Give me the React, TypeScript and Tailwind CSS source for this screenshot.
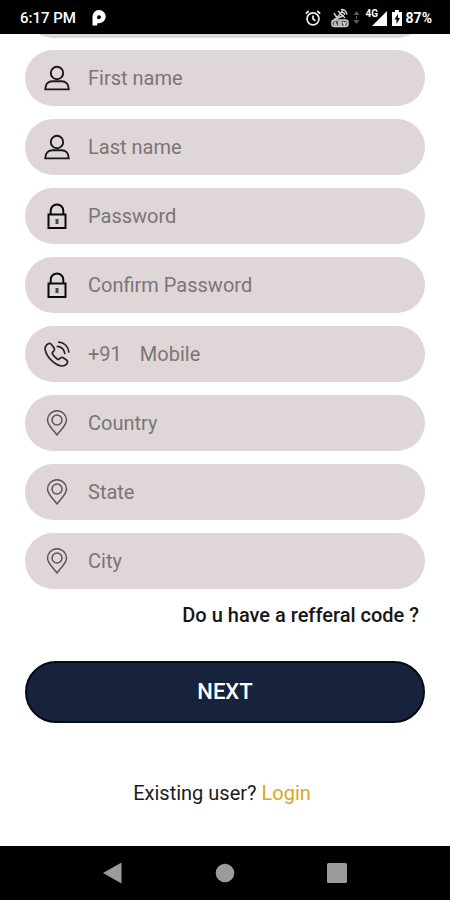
import React from 'react';

const UserIcon = () => (
  <svg className="w-[26px] h-[26px]" viewBox="0 0 26 26" fill="none" stroke="#1c181a" strokeWidth={1.9} strokeLinejoin="round">
    <circle cx="13" cy="8" r="6.2" />
    <path d="M1.200 24.400c0-5.600 3.400-8.200 7.400-8.200h8.800c4 0 7.400 2.600 7.400 8.200z" />
  </svg>
);

const LockIcon = () => (
  <svg className="w-[26px] h-[26px]" viewBox="0 0 26 26" fill="none" stroke="#0c0a0b" strokeWidth={2}>
    <path d="M4.500 11.500h17v13.500h-17z" />
    <path d="M6.700 11.500V7.700a6.300 6.300 0 0 1 12.600 0v3.800" />
    <path d="M13 16v5" stroke="#4b4648" strokeWidth={3} />
  </svg>
);

const PhoneIcon = () => (
  <svg className="w-[26px] h-[26px]" viewBox="0 0 26 26" fill="none" stroke="#2a2527" strokeWidth={1.7} strokeLinecap="round" strokeLinejoin="round">
    <path d="M4.200 2.800C1.800 4.200.7 6.400 1.200 9c.9 4.200 3.600 8 6.800 10.900 3 2.800 6.600 5 10.200 5.100 2.200 0 4.300-1.300 5.200-3.300.4-1 .2-1.800-.6-2.400l-3.500-2.500c-1-.7-1.900-.6-2.800.1l-1.300 1.100c-.7.5-1.300.5-2 0-2-1.400-3.500-3-4.700-5-.4-.7-.3-1.300.2-1.900l1.200-1.400c.7-.9.8-1.700.2-2.700L7.500 3.400C6.700 2.200 5.500 2 4.200 2.800z" />
    <path d="M14.800 1.200c5.600.4 9.600 4.500 10 9.800" />
    <path d="M13.400 5.300c4.200.5 6.900 3.200 7.400 7.200" />
  </svg>
);

const PinIcon = () => (
  <svg className="w-[26px] h-[26px]" viewBox="0 0 26 26" fill="none" stroke="#5c5658" strokeWidth={1.5} strokeLinejoin="round">
    <path d="M13 25C9.500 19.800 3.500 15.500 3.500 10a9.500 9.300 0 0 1 19 0c0 5.500-6 9.800-9.500 15z" />
    <circle cx="13" cy="10" r="5" />
  </svg>
);

const fields = [
  { id: 'firstName', label: 'First name', type: 'text', icon: <UserIcon /> },
  { id: 'lastName', label: 'Last name', type: 'text', icon: <UserIcon /> },
  { id: 'password', label: 'Password', type: 'password', icon: <LockIcon /> },
  { id: 'confirmPassword', label: 'Confirm Password', type: 'password', icon: <LockIcon /> },
  { id: 'mobile', label: 'Mobile', type: 'tel', icon: <PhoneIcon />, prefix: '+91' },
  { id: 'country', label: 'Country', type: 'text', icon: <PinIcon /> },
  { id: 'state', label: 'State', type: 'text', icon: <PinIcon /> },
  { id: 'city', label: 'City', type: 'text', icon: <PinIcon /> },
];

const StatusBar = () => (
  <header className="h-[34px] shrink-0 bg-black text-white flex items-center justify-between pl-5 pr-[18px]">
    <div className="flex items-center gap-4 pt-0.5">
      <span className="text-[15px] leading-5 font-medium">6:17 PM</span>
      <svg className="w-[14px] h-4" viewBox="0 0 14 16">
        <path d="M.5 15.500V7a6.600 6.600 0 1 1 6.800 6.200H5.200v2.300z" fill="#fff" />
        <path d="M5.200 9V7.200A1.900 1.900 0 1 1 7.100 9z" fill="#000" />
      </svg>
    </div>
    <div className="flex items-center gap-1 pt-0.5">
      <svg className="w-4 h-4 mr-1.5" viewBox="0 0 16 16" fill="none" stroke="#f1f1f1" strokeWidth={1.7}>
        <circle cx="8" cy="8.800" r="6" />
        <path d="M8 5.500v3.600l2.500 1.600M.800 3.600l3-2.600M15.200 3.600l-3-2.600" />
      </svg>
      <svg className="w-[18px] h-5" viewBox="0 0 18 20" fill="none" stroke="#d0d0d0" strokeWidth={1.5}>
        <path d="M3 5l3 5 6-8M7 3l7 7M10 1.500c3 0 5.500 2 6 5M11 4c1.500.3 2.500 1.200 3 2.800M3 11.500l10-4" />
        <rect x="1" y="12" width="16" height="6.500" rx="2.500" fill="#555" />
        <path d="M4 13.500v3.500h2M8 14h2v3H8zM12 13.800l1.500 3 1.500-3" />
      </svg>
      <svg className="w-[7px] h-[14px] mr-0.5" viewBox="0 0 7 14" fill="#5c5c5c">
        <path d="M3.500 0L6.500 4h-6zM3.500 13L.500 9h6zM3 5h1v3H3z" />
      </svg>
      <div className="relative w-[22px] h-4">
        <span className="absolute left-0 -top-0.5 text-[10px] leading-3 font-bold">4G</span>
        <svg className="w-[22px] h-4" viewBox="0 0 22 16" fill="#fff">
          <path d="M21 1v15H6l7-7 1-1z" />
        </svg>
      </div>
      <svg className="w-[10px] h-4" viewBox="0 0 10 16">
        <path d="M3 0h4v2h3v14H0V2h3z" fill="#fff" />
        <path d="M6 4L2.500 9.500h2V14L8 8H6z" fill="#000" />
      </svg>
      <span className="text-sm leading-5 font-bold">87%</span>
    </div>
  </header>
);

const App: React.FC = () => {
  return (
    <div className="min-h-screen bg-white font-['Roboto',sans-serif] flex flex-col">
      <StatusBar />

      <main className="flex-1 px-[25px] flex flex-col">
        {/* Field scrolled under the status bar */}
        <div className="h-1 overflow-hidden flex flex-col justify-end">
          <div className="h-14 shrink-0 rounded-full bg-[#dfd6d7]" />
        </div>

        <form className="flex flex-col" onSubmit={(e) => e.preventDefault()}>
          <div className="pt-3 flex flex-col gap-[13px]">
            {fields.map((field) => (
              <div key={field.id} className="h-14 rounded-full bg-[#dfd6d7] flex items-center pl-[19px] pr-6 text-xl text-[#7b7577]">
                <label htmlFor={field.id} aria-label={field.label} className="shrink-0 mr-[18px]">
                  {field.icon}
                </label>
                {field.prefix && <span className="shrink-0 mr-[18px]">{field.prefix}</span>}
                <input
                  id={field.id}
                  type={field.type}
                  placeholder={field.label}
                  className="flex-1 min-w-0 bg-transparent outline-none placeholder:text-[#7b7577]"
                />
              </div>
            ))}
          </div>

          <a href="#referral" className="self-end mt-3 mr-1.5 text-xl leading-7 font-medium text-[#161616]">
            Do u have a refferal code ?
          </a>

          <button type="submit" className="mt-8 h-[62px] rounded-full bg-[#17223d] border-2 border-[#060a18] text-white text-[22px] leading-7 font-medium">
            NEXT
          </button>
        </form>

        <p className="mt-14 mb-9 text-center text-xl text-[#1c1c1c] pr-1.5">
          Existing user?{' '}
          <a href="#login" className="text-[#daa520]">Login</a>
        </p>
      </main>

      <nav className="h-[54px] shrink-0 bg-black flex items-center justify-center gap-[92px]">
        <button aria-label="Back">
          <svg className="w-5 h-[22px]" viewBox="0 0 20 22" fill="#9b9b9b"><path d="M0 11L18.500.500v21z" /></svg>
        </button>
        <button aria-label="Home">
          <svg className="w-5 h-5" viewBox="0 0 20 20" fill="#9b9b9b"><circle cx="10" cy="10" r="9.300" /></svg>
        </button>
        <button aria-label="Recents">
          <svg className="w-5 h-5" viewBox="0 0 20 20" fill="#9b9b9b"><rect width="20" height="20" rx="1.500" /></svg>
        </button>
      </nav>
    </div>
  );
};

export default App;
